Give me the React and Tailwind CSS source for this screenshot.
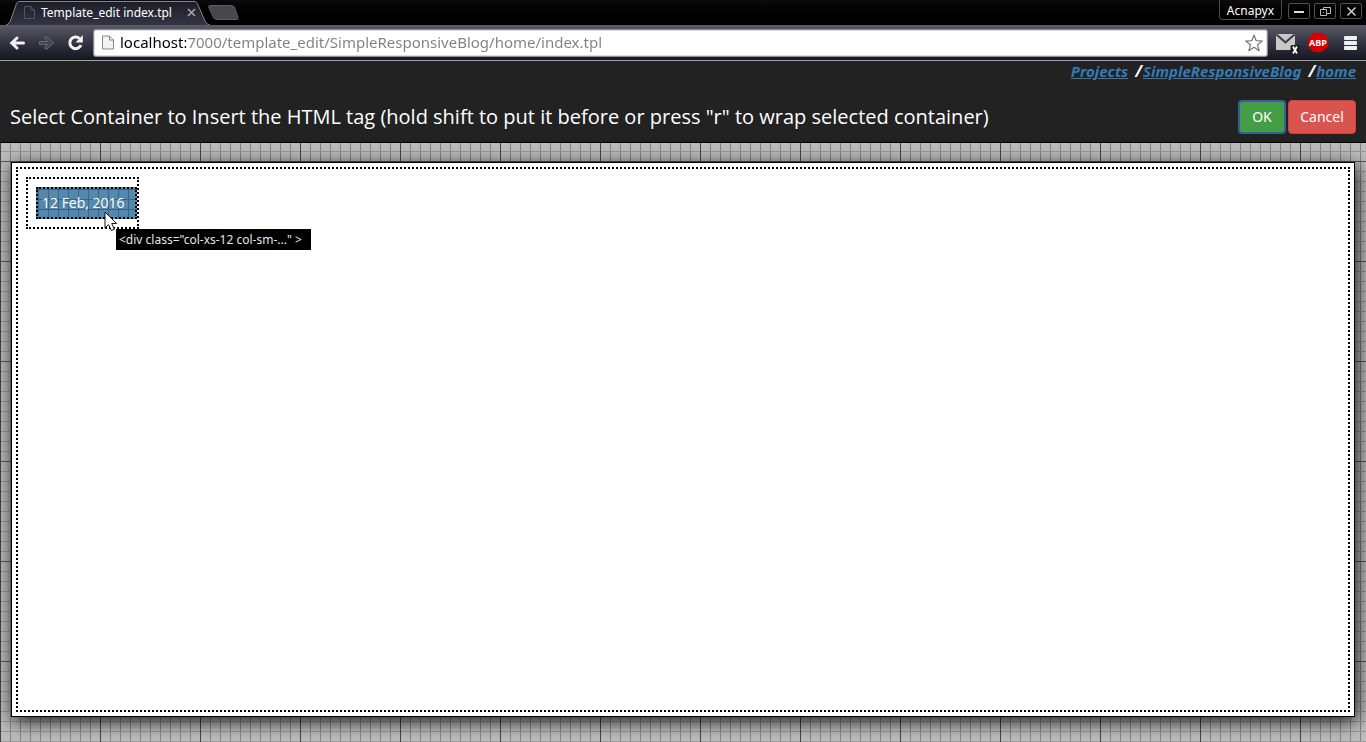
import React, { useState } from "react";

const gridPaper =
  "bg-[#bdbdbd] [background-image:linear-gradient(#555_1px,transparent_1px),linear-gradient(90deg,#444_1px,transparent_1px),linear-gradient(#999_1px,transparent_1px),linear-gradient(90deg,#858585_1px,transparent_1px)] [background-size:100px_100px,100px_100px,10px_10px,10px_10px]";

function PageIcon({ className, fill, stroke }) {
  return (
    <svg className={className} viewBox="0 0 12 14" fill={fill} stroke={stroke} aria-hidden="true">
      <path d="M.5.5h7l4 4v9H.5zM7.5.5v4h4" />
    </svg>
  );
}

function TabStrip() {
  return (
    <div className="flex h-[25px] items-stretch bg-linear-to-b from-[#0c0c0c] to-black pl-[6px]">
      <div className="relative flex w-[206px] shrink-0 items-center pl-[18px]">
        <svg className="absolute inset-0 h-[25px] w-[206px]" viewBox="0 0 206 25" aria-hidden="true">
          <defs>
            <linearGradient id="tab" x1="0" y1="0" x2="0" y2="1">
              <stop offset="0" stopColor="#1d1d2a" />
              <stop offset="1" stopColor="#343542" />
            </linearGradient>
          </defs>
          <path
            d="M0 25C3 24 4 22 5 19L10 5C11 2 12 1.5 14 1.5H188C190 1.5 191 2.500 192 5L199 21C200 23.500 202 24.500 204 25"
            fill="url(#tab)"
            stroke="#85858b"
          />
        </svg>
        <PageIcon className="relative h-[13px] w-[11px]" fill="none" stroke="#5c5c60" />
        <span className="relative ml-[6px] grow whitespace-nowrap text-[12px] text-white">Template_edit index.tpl</span>
        <button type="button" aria-label="Close tab" className="relative mr-[16px]">
          <svg className="h-[9px] w-[9px]" viewBox="0 0 9 9" stroke="#a6a6aa" strokeWidth="1.6">
            <path d="M1 1l7 7M8 1l-7 7" />
          </svg>
        </button>
      </div>
      <button type="button" aria-label="New tab" className="-ml-[5px] self-center">
        <svg className="h-[15px] w-[32px]" viewBox="0 0 32 15" fill="#474750" stroke="#5c5c63">
          <path d="M3 .5h21c2 0 3 .5 4 3l3 9c.3 1.500 0 2-1 2H10c-2 0-3-.5-4-3L2 3C1.500 1.500 1.500 .5 3 .5z" />
        </svg>
      </button>
      <div className="grow" />
      <button type="button" className="mr-[6px] h-[20px] rounded-b border border-t-0 border-[#4b4b4b] px-[7px] pt-[2px] text-[12px] leading-[17px] text-white">
        Acnapyx
      </button>
      <div className="flex gap-[4px] pt-[3px] pr-[4px]">
        <button type="button" aria-label="Minimize" className="flex h-[16px] w-[22px] items-center justify-center rounded-xs border border-[#505050]">
          <svg className="h-[10px] w-[10px]" viewBox="0 0 10 10" fill="#ddd"><path d="M0 5h10v2H0z" /></svg>
        </button>
        <button type="button" aria-label="Restore" className="flex h-[16px] w-[22px] items-center justify-center rounded-xs border border-[#505050]">
          <svg className="h-[9px] w-[11px]" viewBox="0 0 11 9" fill="none" stroke="#bbb">
            <path d="M3.500 2.500V.5h7v6H7M.5 2.500h6v6h-6z" />
            <path d="M3 5h1v1h-1z" fill="#bbb" stroke="none" />
          </svg>
        </button>
        <button type="button" aria-label="Close window" className="flex h-[16px] w-[22px] items-center justify-center rounded-xs border border-[#505050]">
          <svg className="h-[9px] w-[9px]" viewBox="0 0 9 9" stroke="#ddd" strokeWidth="1.300">
            <path d="M.5.5l8 8M8.500.5l-8 8" />
          </svg>
        </button>
      </div>
    </div>
  );
}

function Toolbar() {
  const [address, setAddress] = useState("localhost:7000/template_edit/SimpleResponsiveBlog/home/index.tpl");
  return (
    <div className="flex h-[36px] items-center border-b border-b-[#a0a0a3] bg-linear-to-b from-[#5a5b67] via-[#343542] to-[#161622] pr-[9px] pl-[9px]">
      <button type="button" aria-label="Back">
        <svg className="h-[16px] w-[16px]" viewBox="0 0 16 16" fill="none" stroke="#f2f2f2" strokeWidth="3" strokeLinecap="round">
          <path d="M14.500 8H4M8 3L2.800 8 8 13" />
        </svg>
      </button>
      <button type="button" aria-label="Forward" className="ml-[13px]">
        <svg className="h-[16px] w-[17px]" viewBox="0 0 17 16" fill="#44454d" stroke="#696a72" strokeLinejoin="round">
          <path d="M1.500 6.500h8L7 4c-1-1.200.8-3 2-2l6.500 6L9 14c-1.200 1-3-.8-2-2l2.500-2.500h-8z" />
        </svg>
      </button>
      <button type="button" aria-label="Reload" className="ml-[12px]">
        <svg className="h-[17px] w-[17px]" viewBox="0 0 17 17">
          <path d="M12.500 4.500A5.800 5.800 0 1 0 14 11" fill="none" stroke="#f2f2f2" strokeWidth="3" />
          <path d="M15.800 1v7.500H8.500z" fill="#f2f2f2" />
        </svg>
      </button>
      <div className="ml-[9px] flex h-[28px] grow items-center rounded-[3px] border border-[#8b8b91] bg-white pr-[4px] pl-[8px] shadow-[inset_0_0_0_1px_#ddd]">
        <PageIcon className="h-[15px] w-[12px] shrink-0" fill="#f3f3f3" stroke="#888" />
        <input
          aria-label="Address"
          value={address}
          onChange={(e) => setAddress(e.target.value)}
          className="ml-[6px] h-[24px] min-w-0 grow bg-[linear-gradient(90deg,#000_66px,#808080_66px)] bg-clip-text pb-[2px] text-[15px] leading-[22px] text-transparent caret-black outline-none"
        />
        <button type="button" aria-label="Bookmark">
          <svg className="h-[18px] w-[18px]" viewBox="0 0 18 18" fill="#fff" stroke="#777" strokeLinejoin="round" strokeWidth="1.200">
            <path d="M9 1l2.200 5.700 6.100.3-4.800 3.800 1.700 5.900L9 13.300l-5.200 3.400 1.700-5.900L.7 7l6.100-.3z" />
          </svg>
        </button>
      </div>
      <button type="button" aria-label="Mail" className="ml-[8px]">
        <svg className="mt-[3px] h-[22px] w-[24px]" viewBox="0 0 24 22">
          <path d="M0 1h19v16H0z" fill="#c8c8c8" />
          <path d="M.5 1.500l9 8 9-8" fill="none" stroke="#3c3c44" strokeWidth="2" />
          <rect x="14.500" y="12" width="9.500" height="10" rx="1.500" fill="#1c1d26" />
          <path d="M17 13.500l4 7M21 13.500l-4 7" stroke="#fff" strokeWidth="1.800" />
        </svg>
      </button>
      <button
        type="button"
        className="ml-[8px] flex h-[19px] w-[20px] items-center justify-center bg-[#d40000] text-[9px] font-bold text-white [clip-path:polygon(29%_0,71%_0,100%_29%,100%_71%,71%_100%,29%_100%,0_71%,0_29%)]"
      >
        ABP
      </button>
      <button type="button" aria-label="Menu" className="ml-[16px]">
        <svg className="h-[14px] w-[13px]" viewBox="0 0 13 14" fill="#f0f0f0">
          <rect width="13" height="4" rx="1" />
          <rect y="5" width="13" height="4" rx="1" />
          <rect y="10" width="13" height="4" rx="1" />
        </svg>
      </button>
    </div>
  );
}

function Header() {
  return (
    <header className="border-b border-black bg-[#222] px-[10px] pb-[7px] text-white">
      <nav className="flex h-[22px] justify-end text-[15px] leading-[20px] font-bold italic">
        <a href="#projects" className="text-[#337ab7] underline">Projects</a>
        <span className="mr-[1px] ml-[7px] text-[16px]">/</span>
        <a href="#blog" className="text-[#337ab7] underline">SimpleResponsiveBlog</a>
        <span className="mr-[1px] ml-[7px] text-[16px]">/</span>
        <a href="#home" className="text-[#337ab7] underline">home</a>
      </nav>
      <div className="mt-[16px] flex items-center justify-between">
        <h1 className="whitespace-nowrap font-['Open_Sans',sans-serif] text-[20px] leading-[36px]">
          Select Container to Insert the HTML tag (hold shift to put it before or press "r" to wrap selected container)
        </h1>
        <div className="flex gap-[2px] text-[14px] leading-[28px]">
          <button type="button" className="h-[34px] w-[48px] rounded-[4px] border-2 border-[#34609c] bg-[#449d44]">OK</button>
          <button type="button" className="h-[34px] w-[68px] rounded-[4px] border border-[#d43f3a] bg-[#d9534f]">Cancel</button>
        </div>
      </div>
    </header>
  );
}

function Pointer() {
  return (
    <svg className="absolute top-[22px] left-[66px] h-[21px] w-[14px]" viewBox="0 0 14 21" fill="#fff" stroke="#111" aria-hidden="true">
      <path d="M1 1v16l3.600-3.400 2.800 6 3-1.400-2.700-5.700H12.500z" />
    </svg>
  );
}

export default function App() {
  return (
    <div className="flex min-h-screen flex-col font-['Noto_Sans',sans-serif]">
      <TabStrip />
      <Toolbar />
      <div className={"flex grow flex-col " + gridPaper}>
        <Header />
        <main className="mx-[11px] mt-[19px] mb-[25px] flex grow flex-col border border-black bg-white p-[4px] shadow-[2px_4px_18px_0px_rgba(0,0,0,0.9)]">
          <div className="grow border-2 border-dotted border-black p-[8px]">
            <div className="w-[113px] border-2 border-dotted border-black py-[8px] pl-[8px]">
              <div className="relative h-[32px] border-2 border-dotted border-black bg-[#5588ad] bg-[linear-gradient(#3d6484_1px,transparent_1px),linear-gradient(90deg,#3d6484_1px,transparent_1px)] bg-[size:10px_10px] pl-[4px] font-['Open_Sans',sans-serif] text-[14px] leading-[28px] whitespace-nowrap text-white">
                12 Feb, 2016
                <div className="absolute top-[40px] left-[78px] h-[21px] min-w-[195px] bg-black px-[3px] font-['Noto_Sans',sans-serif] text-[12px] leading-[21px] text-[#e6e6e6]">
                  {'<div class="col-xs-12 col-sm-..." >'}
                </div>
                <Pointer />
              </div>
            </div>
          </div>
        </main>
      </div>
    </div>
  );
}
